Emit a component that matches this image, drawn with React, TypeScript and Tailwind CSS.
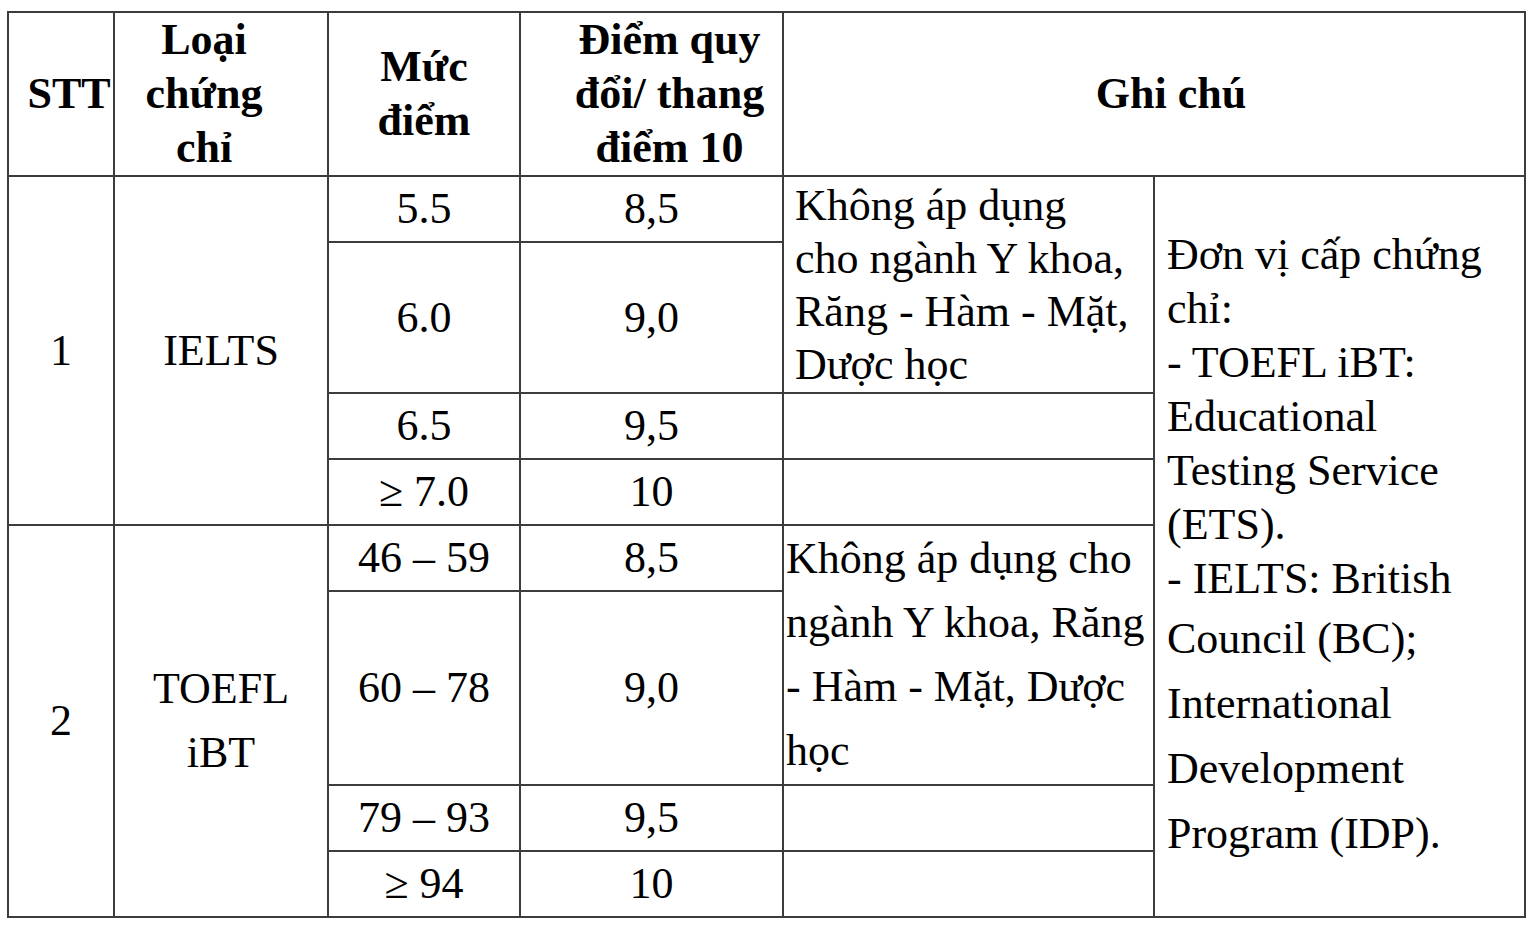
import React from "react";

const cell = "border-2 border-[#3c3c3c] p-0 align-middle";
const num = `${cell} text-center leading-[54px]`;

const ielts = [
  { score: "5.5", scale: "8,5", h: "h-[66px]" },
  { score: "6.0", scale: "9,0", h: "h-[151px]" },
  { score: "6.5", scale: "9,5", h: "h-[66px]" },
  { score: "\u2265 7.0", scale: "10", h: "h-[66px]" },
];

const toefl = [
  { score: "46 \u2013 59", scale: "8,5", h: "h-[66px]" },
  { score: "60 \u2013 78", scale: "9,0", h: "h-[194px]" },
  { score: "79 \u2013 93", scale: "9,5", h: "h-[66px]" },
  { score: "\u2265 94", scale: "10", h: "h-[66px]" },
];

export default function App() {
  return (
    <div className="min-h-screen bg-white pt-[11px] pl-[7px] font-['Liberation_Serif',serif] text-[44px] text-black">
      <table className="table-fixed border-collapse w-[1519px]">
        <colgroup>
          <col className="w-[106px]" />
          <col className="w-[214px]" />
          <col className="w-[192px]" />
          <col className="w-[263px]" />
          <col className="w-[371px]" />
          <col className="w-[371px]" />
        </colgroup>
        <thead>
          <tr className="h-[163px] font-bold">
            <th className={`${cell} pl-[16px] leading-[54px] whitespace-nowrap`}>STT</th>
            <th className={`${cell} pr-[34px] leading-[54px]`}>
              Loại
              <br />
              chứng
              <br />
              chỉ
            </th>
            <th className={`${cell} leading-[54px]`}>
              Mức
              <br />
              điểm
            </th>
            <th className={`${cell} pl-[36px] leading-[54px] whitespace-nowrap`}>
              Điểm quy
              <br />
              đổi/ thang
              <br />
              điểm 10
            </th>
            <th colSpan={2} className={`${cell} pl-[34px] leading-[54px]`}>
              Ghi chú
            </th>
          </tr>
        </thead>
        <tbody>
          {ielts.map((r, i) => (
            <tr key={r.score} className={r.h}>
              {i === 0 && (
                <>
                  <td rowSpan={4} className={num}>1</td>
                  <td rowSpan={4} className={num}>IELTS</td>
                </>
              )}
              <td className={`${num} whitespace-nowrap`}>{r.score}</td>
              <td className={num}>{r.scale}</td>
              {i === 0 && (
                <td rowSpan={2} className={`${cell} pl-[11px] leading-[53px] whitespace-nowrap`}>
                  Không áp dụng
                  <br />
                  cho ngành Y khoa,
                  <br />
                  Răng - Hàm - Mặt,
                  <br />
                  Dược học
                </td>
              )}
              {i >= 2 && <td className={cell}></td>}
              {i === 0 && (
                <td rowSpan={8} className={`${cell} pl-[12px] whitespace-nowrap`}>
                  <div className="leading-[54px]">
                    Đơn vị cấp chứng
                    <br />
                    chỉ:
                    <br />
                    - TOEFL iBT:
                    <br />
                    Educational
                    <br />
                    Testing Service
                    <br />
                    (ETS).
                    <br />
                    - IELTS: British
                  </div>
                  <div className="leading-[65px]">
                    Council (BC);
                    <br />
                    International
                    <br />
                    Development
                    <br />
                    Program (IDP).
                  </div>
                </td>
              )}
            </tr>
          ))}
          {toefl.map((r, i) => (
            <tr key={r.score} className={r.h}>
              {i === 0 && (
                <>
                  <td rowSpan={4} className={num}>2</td>
                  <td rowSpan={4} className={`${cell} text-center leading-[64px]`}>
                    TOEFL
                    <br />
                    iBT
                  </td>
                </>
              )}
              <td className={`${num} whitespace-nowrap`}>{r.score}</td>
              <td className={num}>{r.scale}</td>
              {i === 0 && (
                <td rowSpan={2} className={`${cell} pl-[2px] leading-[64px] whitespace-nowrap`}>
                  Không áp dụng cho
                  <br />
                  ngành Y khoa, Răng
                  <br />
                  - Hàm - Mặt, Dược
                  <br />
                  học
                </td>
              )}
              {i >= 2 && <td className={cell}></td>}
            </tr>
          ))}
        </tbody>
      </table>
    </div>
  );
}
